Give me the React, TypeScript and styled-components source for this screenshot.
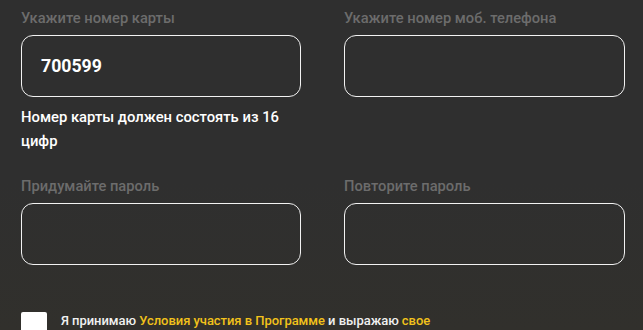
import React from "react";
import styled, { createGlobalStyle } from "styled-components";

const Global = createGlobalStyle`
  html, body { margin: 0; padding: 0; }
  body {
    background: #2f2f2f;
    font-family: Roboto, "Noto Sans", Arial, sans-serif;
    width: 643px;
    height: 330px;
    overflow: hidden;
  }
`;

const Page = styled.div`
  width: 643px;
  height: 330px;
  box-sizing: border-box;
  padding: 8px 18px 0 21px;
  background: linear-gradient(180deg, #2f2f2f 0%, #2f2f2f 55%, #31302c 100%);
  overflow: hidden;
`;

const Grid = styled.div`
  display: grid;
  grid-template-columns: 280px 281px;
  column-gap: 43px;
`;

const Field = styled.div<{ $top?: number }>`
  display: flex;
  flex-direction: column;
  padding-top: ${(p) => p.$top ?? 0}px;
`;

const Label = styled.label`
  font-size: 14.7px;
  font-weight: 500;
  line-height: 20px;
  color: #6c6c6c;
  height: 20px;
  margin-bottom: 7px;
`;

const InputBox = styled.div`
  box-sizing: border-box;
  height: 62px;
  border: 1.5px solid #f2f2f2;
  border-radius: 12px;
  display: flex;
  align-items: center;
  padding-left: 19px;
  font-size: 17.7px;
  font-weight: 700;
  color: #ffffff;
`;

const Hint = styled.div`
  margin-top: 8px;
  font-size: 14.8px;
  font-weight: 500;
  line-height: 24px;
  color: #ffffff;
`;

const Agree = styled.div`
  display: flex;
  align-items: flex-start;
  gap: 14px;
  margin-top: 47px;
`;

const Box = styled.div`
  width: 26px;
  height: 26px;
  background: #ffffff;
  border-radius: 2px;
  flex: none;
`;

const AgreeText = styled.div`
  font-size: 13px;
  font-weight: 500;
  line-height: 18px;
  color: #f0f0f0;
  letter-spacing: -0.05px;
`;

const Link = styled.span`
  color: #f2c21b;
`;

export default function App() {
  return (
    <Page>
      <Global />
      <Grid>
        <Field>
          <Label>Укажите номер карты</Label>
          <InputBox>700599</InputBox>
          <Hint>Номер карты должен состоять из 16 цифр</Hint>
        </Field>
        <Field>
          <Label>Укажите номер моб. телефона</Label>
          <InputBox />
        </Field>
        <Field $top={23}>
          <Label>Придумайте пароль</Label>
          <InputBox />
        </Field>
        <Field $top={23}>
          <Label>Повторите пароль</Label>
          <InputBox />
        </Field>
      </Grid>
      <Agree>
        <Box />
        <AgreeText>
          Я принимаю <Link>Условия участия в Программе</Link> и выражаю{" "}
          <Link>свое</Link>
        </AgreeText>
      </Agree>
    </Page>
  );
}
